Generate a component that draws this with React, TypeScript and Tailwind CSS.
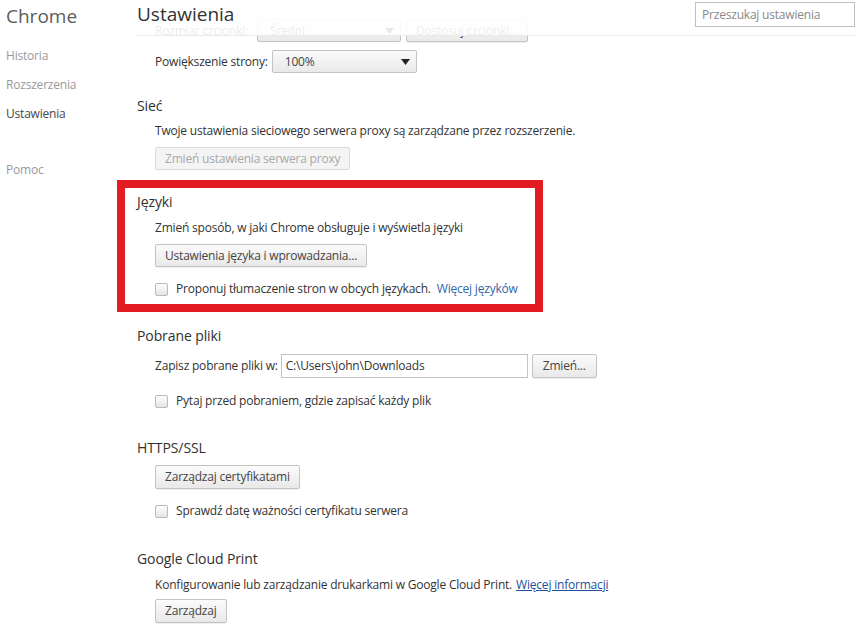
import React from "react";

const font = "font-['Open_Sans','Noto_Sans',sans-serif]";

const btnBase =
  "h-[24px] px-[9px] rounded-[2px] border text-[12px] tracking-[-0.2px] leading-none flex items-center shrink-0";
const btn = `${btnBase} border-[#c3c3c3] bg-linear-to-b from-[#fbfbfb] to-[#e9e9e9] text-[#444] shadow-[0_1px_0_rgba(0,0,0,0.06)]`;
const btnDisabled = `${btnBase} border-[#dadada] bg-[#f4f4f4] text-[#a8a8a8]`;

function Checkbox() {
  return (
    <span className="w-[13px] h-[13px] rounded-[2px] border border-[#b9b9b9] bg-linear-to-b from-white to-[#e4e4e4] shrink-0" />
  );
}

function Caret() {
  return (
    <svg width="9" height="6" viewBox="0 0 9 6" className="shrink-0">
      <path d="M0 0h9L4.5 6z" fill="#222" />
    </svg>
  );
}

function Select({ value, width }: { value: string; width: string }) {
  return (
    <div
      className={`${width} h-[23px] rounded-[2px] border border-[#c3c3c3] bg-linear-to-b from-[#fbfbfb] to-[#e9e9e9] flex items-center justify-between pl-[12px] pr-[6px] text-[12px] text-[#444] shrink-0`}
    >
      <span>{value}</span>
      <Caret />
    </div>
  );
}

function Heading({ children, className = "" }: { children: React.ReactNode; className?: string }) {
  return (
    <div className={`h-[20px] flex items-center text-[14px] tracking-[-0.1px] text-[#303030] ${className}`}>
      {children}
    </div>
  );
}

function Line({ children, className = "" }: { children: React.ReactNode; className?: string }) {
  return (
    <div className={`h-[18px] pl-[18px] flex items-center text-[12px] tracking-[-0.2px] text-[#333] whitespace-nowrap ${className}`}>
      {children}
    </div>
  );
}

function CheckRow({ children, className = "" }: { children: React.ReactNode; className?: string }) {
  return (
    <div className={`h-[18px] pl-[18px] flex items-center gap-[8px] text-[12px] tracking-[-0.2px] text-[#333] whitespace-nowrap ${className}`}>
      <Checkbox />
      <span>{children}</span>
    </div>
  );
}

export default function App() {
  return (
    <div className={`w-[864px] h-[625px] overflow-hidden bg-white flex ${font}`}>
      {/* Sidebar */}
      <nav className="w-[137px] shrink-0 pl-[6px] flex flex-col tracking-[-0.2px]">
        <div className="h-[30px] mt-[1px] flex items-center text-[19px] tracking-normal text-[#5c5c5c]">Chrome</div>
        <div className="mt-[16px] h-[18px] flex items-center text-[12px] text-[#999]">Historia</div>
        <div className="mt-[11px] h-[18px] flex items-center text-[12px] text-[#999]">Rozszerzenia</div>
        <div className="mt-[11px] h-[18px] flex items-center text-[12px] text-[#444]">Ustawienia</div>
        <div className="mt-[38px] h-[18px] flex items-center text-[12px] text-[#999]">Pomoc</div>
      </nav>

      {/* Main column */}
      <main className="relative flex-1">
        {/* Header, lying over the scrolled content */}
        <div className="absolute top-0 left-[-2px] right-[7px] h-[36px] bg-white/90 border-b border-[#eaeaea] flex items-center justify-between pl-[2px] z-10">
          <span className="text-[19px] text-[#333] -mt-[6px]">Ustawienia</span>
          <div className="w-[160px] h-[25px] border border-[#c0c0c0] flex items-center pl-[6px] text-[12px] tracking-[-0.2px] text-[#888] bg-white -mt-[6px] mr-[2px]">
            Przeszukaj ustawienia
          </div>
        </div>

        <div className="flex flex-col pt-[19px]">
          {/* Partly hidden row */}
          <div className="h-[23px] pl-[18px] flex items-center text-[12px] tracking-[-0.2px] text-[#333]">
            <span className="w-[102px]">Rozmiar czcionki:</span>
            <Select value="Średni" width="w-[144px]" />
            <div className={`${btn} ml-[5px] !h-[23px]`}>Dostosuj czcionki...</div>
          </div>

          <div className="mt-[8px] h-[23px] pl-[18px] flex items-center gap-[4px] text-[12px] tracking-[-0.2px] text-[#333]">
            <span>Powiększenie strony:</span>
            <Select value="100%" width="w-[145px]" />
          </div>

          {/* Sieć */}
          <Heading className="mt-[22px]">Sieć</Heading>
          <Line className="mt-[7px]">
            Twoje ustawienia sieciowego serwera proxy są zarządzane przez rozszerzenie.
          </Line>
          <div className="mt-[7px] pl-[18px] flex">
            <div className={`${btnDisabled} !h-[23px]`}>Zmień ustawienia serwera proxy</div>
          </div>

          {/* Języki */}
          <div className="relative mt-[21px]">
            <div className="absolute top-[-11px] left-[-20px] w-[426px] h-[132px] border-[8px] border-[#e31c23] pointer-events-none" />
            <Heading>Języki</Heading>
            <Line className="mt-[8px]">Zmień sposób, w jaki Chrome obsługuje i wyświetla języki</Line>
            <div className="mt-[7px] pl-[18px] flex">
              <div className={`${btn} !h-[23px]`}>Ustawienia języka i wprowadzania...</div>
            </div>
            <CheckRow className="mt-[13px]">
              Proponuj tłumaczenie stron w obcych językach.
              <span className="ml-[6px] text-[#3366aa]">Więcej języków</span>
            </CheckRow>
          </div>

          {/* Pobrane pliki */}
          <Heading className="mt-[27px]">Pobrane pliki</Heading>
          <div className="mt-[9px] h-[24px] pl-[18px] flex items-center text-[12px] tracking-[-0.2px] text-[#333]">
            <span className="mr-[3px]">Zapisz pobrane pliki w:</span>
            <div className="w-[247px] h-[24px] border border-[#c3c3c3] flex items-center pl-[4px] text-[#333]">
              C:\Users\john\Downloads
            </div>
            <div className={`${btn} ml-[4px] w-[65px] justify-center`}>Zmień...</div>
          </div>
          <CheckRow className="mt-[14px]">Pytaj przed pobraniem, gdzie zapisać każdy plik</CheckRow>

          {/* HTTPS/SSL */}
          <Heading className="mt-[27px]">HTTPS/SSL</Heading>
          <div className="mt-[8px] pl-[18px] flex">
            <div className={btn}>Zarządzaj certyfikatami</div>
          </div>
          <CheckRow className="mt-[13px]">Sprawdź datę ważności certyfikatu serwera</CheckRow>

          {/* Google Cloud Print */}
          <Heading className="mt-[28px]">Google Cloud Print</Heading>
          <Line className="mt-[8px]">
            Konfigurowanie lub zarządzanie drukarkami w Google Cloud Print.
            <span className="ml-[4px] text-[#1e4f9e] underline">Więcej informacji</span>
          </Line>
          <div className="mt-[5px] pl-[18px] flex">
            <div className={btn}>Zarządzaj</div>
          </div>
        </div>
      </main>
    </div>
  );
}
